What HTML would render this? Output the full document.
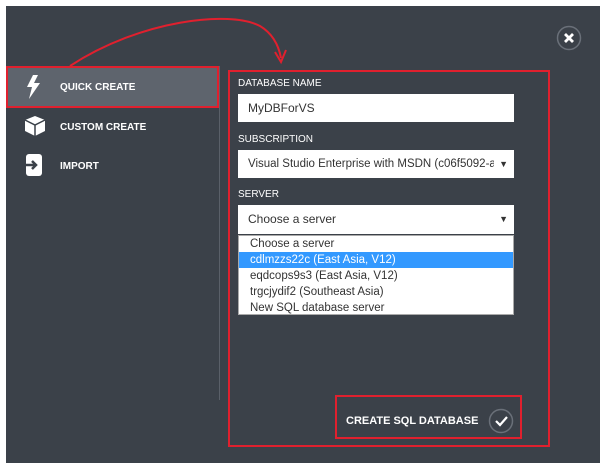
<!DOCTYPE html><html><head><style>
body{margin:0;width:606px;height:471px;background:#fff;position:relative;overflow:hidden;font-family:"Liberation Sans",sans-serif}
.p{position:absolute;left:6px;top:6px;width:594px;height:457px;background:#3b4149}
.a{position:absolute}
.lbl{position:absolute;color:#fff;font-size:10px;left:238px}
.in{position:absolute;left:238px;width:276px;background:#fff;font-size:12px;color:#333;box-sizing:border-box;padding-left:10px;overflow:hidden;white-space:nowrap}
.nav{position:absolute;left:60px;color:#fff;font-size:10px;font-weight:bold}
.dd div{height:16px;line-height:16px;padding-left:11px;font-size:11.5px}
</style></head><body>
<div class="p"></div>
<div class="a" style="left:8px;top:68px;width:209px;height:38px;background:#5e646d"></div>
<div class="a" style="left:6px;top:66px;width:209px;height:38px;border:2px solid #e0202e"></div>
<div class="a" style="left:219px;top:66px;width:1px;height:334px;background:#5a6069"></div>
<svg class="a" style="left:24px;top:74px" width="20" height="26"><path d="M9 1 L3 13 L8 13 L5 25 L16 9 L10 9 L14 1Z" fill="#fff"/></svg>
<div class="nav" style="top:82px">QUICK CREATE</div>
<svg class="a" style="left:24px;top:115px" width="22" height="22"><path d="M11 1 L21 5 L21 16 L11 21 L1 16 L1 5Z" fill="#fff"/><path d="M1 5 L11 10 L21 5 M11 10 L11 21" stroke="#3b4149" stroke-width="1.5" fill="none"/></svg>
<div class="nav" style="top:122px">CUSTOM CREATE</div>
<svg class="a" style="left:24px;top:153px" width="20" height="24"><rect x="2" y="1" width="16" height="22" rx="3" fill="#fff"/><path d="M0 12 H12 M8 8 L12 12 L8 16" stroke="#3b4149" stroke-width="2.5" fill="none"/></svg>
<div class="nav" style="top:161px">IMPORT</div>
<div class="a" style="left:228px;top:70px;width:318px;height:373px;border:2px solid #e0202e"></div>
<svg class="a" style="left:0;top:0" width="606" height="80"><path d="M70 66 C140 20 230 10 260 26 C270 32 278 42 281 58" stroke="#e0202e" stroke-width="2" fill="none"/><path d="M275 52 L281 62 L286 50" stroke="#e0202e" stroke-width="2" fill="none"/></svg>
<div class="lbl" style="top:78px">DATABASE NAME</div>
<div class="in" style="top:94px;height:28px;line-height:28px">MyDBForVS</div>
<div class="lbl" style="top:134px">SUBSCRIPTION</div>
<div class="in" style="top:150px;height:28px;line-height:28px;padding-right:20px;font-size:11.5px"><span style="display:block;width:246px;overflow:hidden">Visual Studio Enterprise with MSDN (c06f5092-a</span><span style="position:absolute;right:6px;top:0;font-size:9px">▼</span></div>
<div class="lbl" style="top:189px">SERVER</div>
<div class="in" style="top:205px;height:29px;line-height:29px">Choose a server<span style="position:absolute;right:6px;font-size:9px">▼</span></div>
<div class="a dd" style="left:238px;top:235px;width:276px;height:80px;background:#fff;color:#333;box-sizing:border-box;border:1px solid #aaa">
<div>Choose a server</div><div style="background:#3399ff;color:#fff">cdlmzzs22c (East Asia, V12)</div><div>eqdcops9s3 (East Asia, V12)</div><div>trgcjydif2 (Southeast Asia)</div><div>New SQL database server</div></div>
<div class="a" style="left:335px;top:395px;width:183px;height:40px;border:2px solid #e0202e"></div>
<div class="a" style="left:346px;top:415px;color:#fff;font-weight:bold;font-size:11px">CREATE SQL DATABASE</div>
<svg class="a" style="left:488px;top:408px" width="26" height="26"><circle cx="13" cy="13" r="11.5" fill="none" stroke="#6a7079" stroke-width="1.5"/><path d="M8 13 L12 17 L19 9" stroke="#fff" stroke-width="2.2" fill="none"/></svg>
<svg class="a" style="left:556px;top:25px" width="26" height="26"><circle cx="13" cy="13" r="11.5" fill="none" stroke="#6a7079" stroke-width="1.5"/><path d="M9 9 L17 17 M17 9 L9 17" stroke="#fff" stroke-width="2.8"/></svg>
</body></html>
